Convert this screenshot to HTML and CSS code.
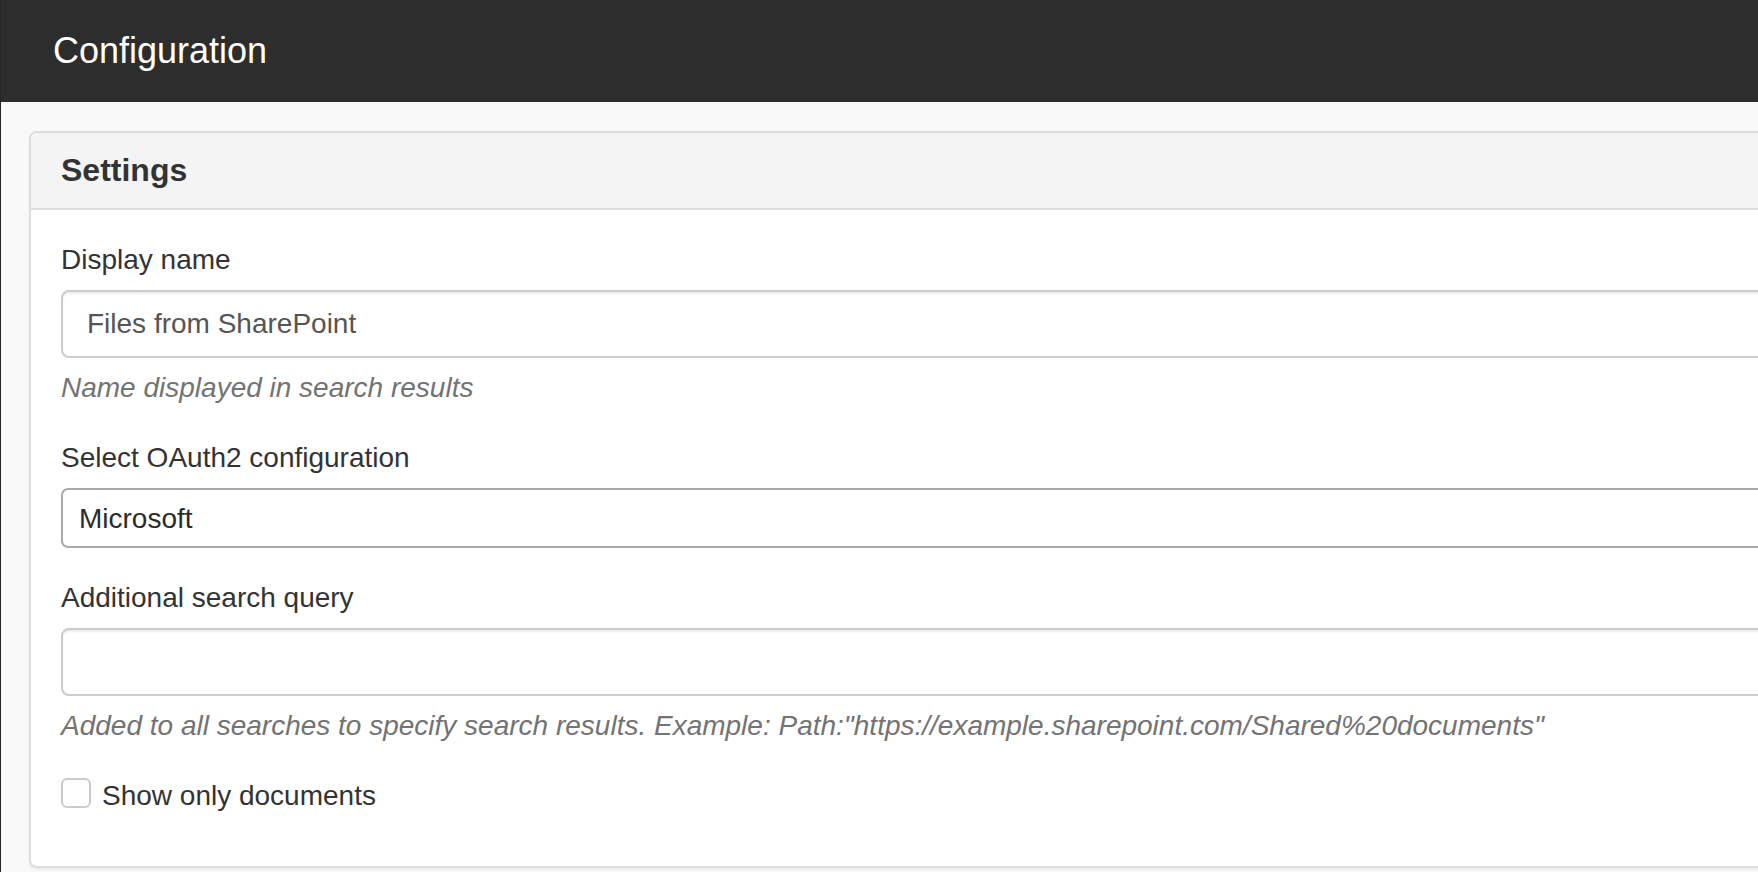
FILE: index.html
```html
<!DOCTYPE html>
<html lang="en">
<head>
<meta charset="utf-8">
<title>Configuration</title>
<link rel="stylesheet" href="styles.css">
</head>
<body>
<div class="page">
  <header class="topbar">
    <h1 class="topbar-title">Configuration</h1>
  </header>
  <main class="content">
    <section class="panel">
      <div class="panel-heading">
        <h2 class="panel-title">Settings</h2>
      </div>
      <div class="panel-body">
        <div class="form-group">
          <label class="control-label" for="displayName">Display name</label>
          <input class="form-control" id="displayName" type="text" value="Files from SharePoint">
          <p class="help-block">Name displayed in search results</p>
        </div>
        <div class="form-group">
          <label class="control-label" for="oauth">Select OAuth2 configuration</label>
          <select class="form-select" id="oauth">
            <option>Microsoft</option>
          </select>
        </div>
        <div class="form-group">
          <label class="control-label" for="query">Additional search query</label>
          <input class="form-control" id="query" type="text" value="">
          <p class="help-block">Added to all searches to specify search results. Example: Path:"https://example.sharepoint.com/Shared%20documents"</p>
        </div>
        <div class="checkbox">
          <label class="checkbox-label">
            <input class="checkbox-input" type="checkbox">
            <span>Show only documents</span>
          </label>
        </div>
      </div>
    </section>
  </main>
</div>
</body>
</html>
```
FILE: styles.css
```css
* {
  box-sizing: border-box;
}

html, body {
  margin: 0;
  padding: 0;
  height: 100%;
}

body {
  font-family: "Liberation Sans", Arial, Helvetica, sans-serif;
  font-size: 28px;
  line-height: 40px;
  color: #333333;
  background: #ffffff;
  overflow: hidden;
}

.page {
  display: flex;
  flex-direction: column;
  height: 100%;
  border-left: 1px solid #262626;
}

.topbar {
  height: 102px;
  flex: 0 0 102px;
  background: #2d2d2d;
  display: flex;
  align-items: center;
  padding-left: 52px;
}

.topbar-title {
  margin: 0;
  font-size: 36px;
  line-height: 40px;
  font-weight: normal;
  color: #ffffff;
}

.content {
  flex: 1 1 auto;
  background: #f9f9f9;
  padding: 29px 0 0 28px;
  overflow: hidden;
}

.panel {
  width: 1900px;
  background: #ffffff;
  border: 2px solid #dddddd;
  border-radius: 8px;
  box-shadow: 0 2px 2px rgba(0, 0, 0, 0.05);
}

.panel-heading {
  background: #f4f4f4;
  border-bottom: 2px solid #dddddd;
  border-radius: 6px 6px 0 0;
  padding: 20px 30px;
}

.panel-title {
  margin: 0;
  font-size: 32px;
  line-height: 35px;
  font-weight: bold;
  color: #333333;
}

.panel-body {
  padding: 30px 30px 30px 30px;
}

.form-group {
  margin-bottom: 30px;
}

.control-label {
  display: block;
  margin-bottom: 10px;
  font-weight: normal;
  color: #333333;
}

.form-control {
  display: block;
  width: 100%;
  height: 68px;
  padding: 0 24px;
  font-family: inherit;
  font-size: 28px;
  color: #555555;
  background: #ffffff;
  border: 2px solid #cccccc;
  border-radius: 8px;
  box-shadow: inset 0 2px 2px rgba(0, 0, 0, 0.075);
  outline: none;
}

.form-select {
  display: block;
  width: 100%;
  height: 60px;
  padding: 0 16px;
  font-family: inherit;
  font-size: 28px;
  color: #2b2b2b;
  background: #ffffff;
  border: 2px solid #a9a9a9;
  border-radius: 7px;
  -webkit-appearance: none;
  appearance: none;
  outline: none;
}

.help-block {
  margin: 10px 0 0 0;
  font-style: italic;
  color: #737373;
}

.checkbox {
  margin-bottom: 20px;
}

.checkbox-label {
  display: flex;
  align-items: flex-start;
  gap: 11px;
  color: #333333;
}

.checkbox-input {
  -webkit-appearance: none;
  appearance: none;
  flex: 0 0 30px;
  width: 30px;
  height: 30px;
  margin: 2px 0 0 0;
  border: 2px solid #cbcbcb;
  border-radius: 6px;
  background: #ffffff;
}
```
